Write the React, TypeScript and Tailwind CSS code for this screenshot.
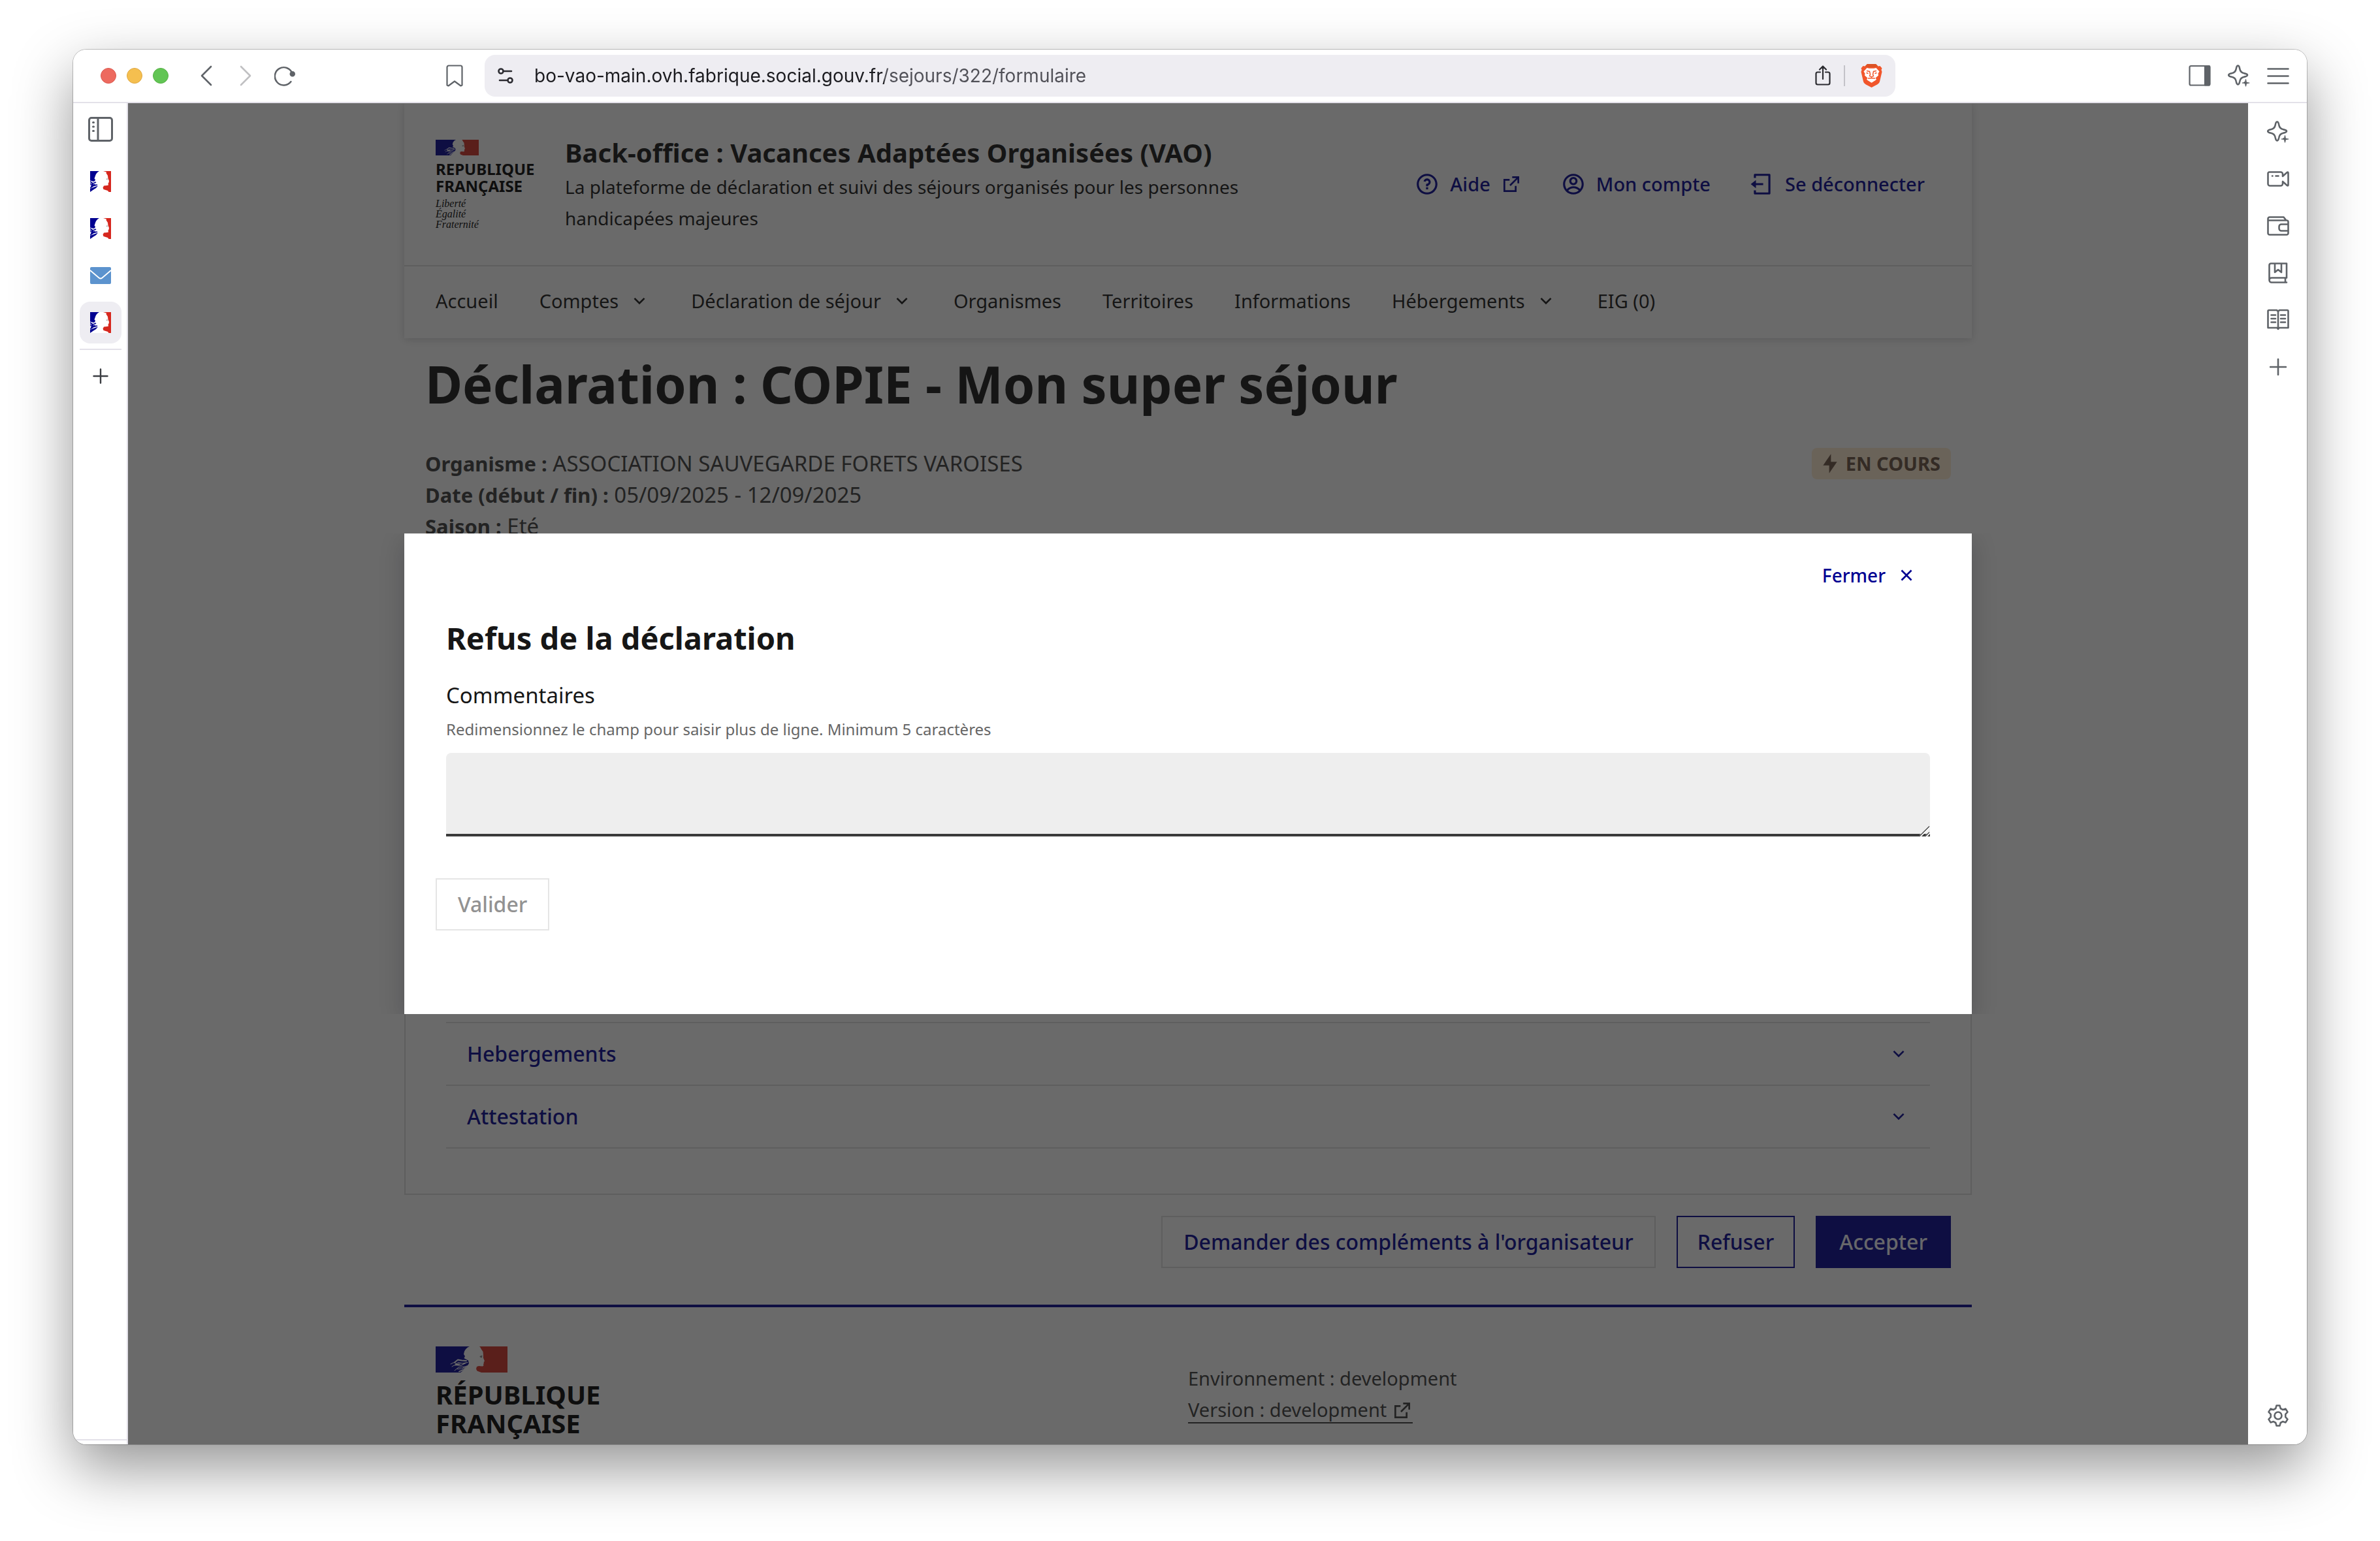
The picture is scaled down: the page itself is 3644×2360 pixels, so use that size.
import React from "react";
import {
  RiAccountCircleLine,
  RiArrowDownSLine,
  RiCloseLine,
  RiFlashlightFill,
  RiLogoutBoxLine,
  RiQuestionLine,
} from "react-icons/ri";

function FlagLogo({ className }: { className: string }) {
  return (
    <svg viewBox="0 0 110 40" className={className} aria-hidden="true">
      <path
        fill="#000091"
        d="M0 0H52C48 1.500 46 4 44 7.500L43 12L45 15L43.500 18L46 19.500L50 21.500L51 26L47 32L43 36L38 40H0Z"
      />
      <path
        fill="#D32F24"
        d="M67 0H110V40H70L63.500 37.500L62 34.500L63 31L66 30L72 30.500L73.500 29L73 27L74 25.500L73.500 24L75 22.500L73 17.500V13L72.500 8L70 4.500L68.500 1.500Z"
      />
      <g fill="none" stroke="#fff" strokeLinecap="round" strokeLinejoin="round">
        <path strokeWidth="1.800" d="M29 24.500L34 20.500L40 21.500L47 22" />
        <path strokeWidth="1" d="M23 27L28 24.500L31 26M25 31L31 27.500M29 37L35 32L44 31" />
        <path strokeWidth="1.200" d="M30 28.500L38 29.500L47 25M34 24.500L41 26L49 24.500M33 34.500L41 34L46 30.500" />
        <path strokeWidth="1.800" d="M36 38.500L43 35.500L48 30" />
      </g>
      <path fill="#fff" d="M31 25.500L39 27L36 28.500L29 29.500Z" />
      <path fill="#888" d="M67.500 15L71.500 13.500L71 17.500L69.500 17L68 16.500Z" />
    </svg>
  );
}

function Favicon() {
  return (
    <svg viewBox="0 0 32 32" className="size-8" aria-hidden="true">
      <path fill="#fff" d="M0 0H32V32H0Z" />
      <path fill="#000091" d="M0 0H14C11 1.500 9 4 8 7L6.500 11.500L8 13L7 15.500L5 16L0 14.500Z" />
      <path
        fill="none"
        stroke="#000091"
        strokeWidth="1.800"
        d="M0 16L4 19L9 17M0 19.500L5 21L1 23L8 20.500M0 26L5 22.500L11 21"
      />
      <path fill="#000091" d="M0 27L5 25L12 22.500L9 26L5 28.500L0 32Z" />
      <path
        fill="#D6281F"
        d="M20 0H32V32H28.500L27 30L20.500 28L19.500 25.500L21 22.500L26 22L28 21.500L27.500 19L28.500 17.500L29 15L27.500 11.500L27 7L24.500 3L25 1.500Z"
      />
      <path fill="#999" d="M24.500 12L26.500 11V14Z" />
    </svg>
  );
}

function Stroke({ className, w = 34, h = 34, sw = 2.2, children }: { className: string; w?: number; h?: number; sw?: number; children: React.ReactNode }) {
  return (
    <svg
      viewBox={`0 0 ${w} ${h}`}
      className={className}
      fill="none"
      stroke="currentColor"
      strokeWidth={sw}
      strokeLinecap="round"
      strokeLinejoin="round"
      aria-hidden="true"
    >
      {children}
    </svg>
  );
}

function Sparkle() {
  return (
    <Stroke className="size-[34px]" sw={2.6}>
      <path d="M15.500 1.500C17.500 1.500 17.800 4 18.300 6.500C19 10.500 21 12.500 25 13.300C27.500 13.800 30 14.200 30 16S27.500 18.200 25 18.700C21 19.500 19 21.500 18.300 25.500C17.800 28 17.500 30.500 15.500 30.500S13.200 28 12.700 25.500C12 21.500 10 19.500 6 18.700C3.500 18.200 1.200 17.800 1.200 16S3.500 13.800 6 13.300C10 12.500 12 10.500 12.700 6.500C13.200 4 13.500 1.500 15.500 1.500Z" />
      <path
        fill="currentColor"
        stroke="none"
        d="M27.500 22C28.500 22 28.500 26.500 29.200 26.800C29.500 27.200 33.500 27 33.500 28S29.500 28.800 29.200 29.200C28.500 29.500 28.500 33.500 27.500 33.500S26.500 29.500 25.800 29.200C25.500 28.800 21.500 29 21.500 28S25.500 27.200 25.800 26.800C26.500 26.500 26.500 22 27.500 22Z"
      />
    </Stroke>
  );
}

function ExternalIcon({ className }: { className: string }) {
  return (
    <svg viewBox="0 0 24 24" fill="currentColor" className={className} aria-hidden="true">
      <path d="M10 6v2H5v11h11v-5h2v7H3V6h7zm11-3v8h-2V6.400l-7.800 7.800-1.400-1.400L17.600 5H13V3h8z" />
    </svg>
  );
}

function BraveIcon() {
  return (
    <svg viewBox="0 0 33 36" className="h-9 w-[33px]" aria-hidden="true">
      <path
        fill="#F1562B"
        d="M10 0H23L26.500 3.500L29.500 3L32.500 6.500L31.500 9L32.500 12L29 27C28.500 29 27 30 25.500 31.200L16.500 36L7.500 31.200C6 30 4.500 29 4 27L.5 12L1.500 9L.5 6.500L3.500 3L6.500 3.500Z"
      />
      <path fill="#DC5325" d="M10 0H23L26.500 3.500L22 5H11L6.500 3.500Z" />
      <path
        fill="#fff"
        d="M9.500 6L13 6.800H20L23.500 6L28.500 11.500L26.500 14.500L27 17.500L22.500 21.500L24 23.500L22.500 25L16.500 28.800L10.500 25L9 23.500L10.500 21.500L6 17.500L6.500 14.500L4.500 11.500Z"
      />
      <path
        fill="none"
        stroke="#F1562B"
        strokeWidth="1.500"
        d="M9 10.500L13.500 11.500L14.500 16L13.500 18.500L16.500 20L19.500 18.500L18.500 16L19.500 11.500L24 10.500M16.500 20V22M11 22L16.500 21.500L22 22M8.500 13.500L11.500 14.500M24.500 13.500L21.500 14.500"
      />
    </svg>
  );
}

function BrowserToolbar() {
  return (
    <div className="flex h-[82px] shrink-0 items-center border-b-2 border-[#e3e1e9] bg-white text-[#5f6368]">
      <div className="flex w-[600px] shrink-0 items-center pl-[42px]">
        <div className="flex gap-4">
          <button aria-label="Fermer la fenêtre" className="size-6 rounded-full border border-[#dc5a50] bg-[#ed6a5f]" />
          <button aria-label="Réduire la fenêtre" className="size-6 rounded-full border border-[#dfa843] bg-[#f5bf4f]" />
          <button aria-label="Agrandir la fenêtre" className="size-6 rounded-full border border-[#56b045] bg-[#62c554]" />
        </div>
        <div className="ml-[42px] flex gap-7">
          <button aria-label="Précédent" className="flex size-8 items-center justify-center">
            <Stroke className="size-8" w={32} h={32} sw={2.6}>
              <path d="M23 2L9 16L23 30" />
            </Stroke>
          </button>
          <button aria-label="Suivant" className="flex size-8 items-center justify-center text-[#c0c0c2]">
            <Stroke className="size-8" w={32} h={32} sw={2.6}>
              <path d="M9 2L23 16L9 30" />
            </Stroke>
          </button>
          <button aria-label="Actualiser" className="flex size-8 items-center justify-center">
            <Stroke className="h-8 w-[34px]" w={34} h={32} sw={2.6}>
              <path d="M29 12A14.500 14.500 0 1 0 27 25.500" />
              <circle cx="29.500" cy="13" r="3.200" fill="currentColor" />
            </Stroke>
          </button>
        </div>
        <button aria-label="Ajouter aux favoris" className="ml-auto flex size-8 items-center justify-center">
          <Stroke className="h-[34px] w-[26px]" w={26} h={34}>
            <path d="M4 1.500H22a2.500 2.500 0 0 1 2.500 2.500V31.500L22.500 32.500L13 25.500L3.500 32.500L1.500 31.500V4A2.500 2.500 0 0 1 4 1.500Z" />
          </Stroke>
        </button>
      </div>
      <div className="ml-[30px] flex h-16 min-w-0 flex-1 items-center rounded-2xl bg-[#eeedf2] px-5 text-[#2b2b30]">
        <Stroke className="h-[26px] w-6 shrink-0" w={24} h={26} sw={2.6}>
          <circle cx="5" cy="6" r="3.500" />
          <path d="M9 6H21M3 20H14" />
          <circle cx="19" cy="20" r="3.500" />
        </Stroke>
        <input
          aria-label="Adresse de la page"
          defaultValue="bo-vao-main.ovh.fabrique.social.gouv.fr/sejours/322/formulaire"
          className="ml-8 min-w-0 flex-1 bg-[linear-gradient(to_right,#1b1b1f_536px,#505057_536px)] bg-clip-text font-['Inter',sans-serif] text-[28px] leading-10 text-transparent outline-none"
        />
        <button aria-label="Partager" className="flex w-6 items-center justify-center">
          <Stroke className="h-8 w-6" w={24} h={32}>
            <path d="M12 21V1.500M7 6.500L12 1.500L17 6.500M8 10.500H4a2.500 2.500 0 0 0-2.500 2.500V27A2.500 2.500 0 0 0 4 29.500H20A2.500 2.500 0 0 0 22.500 27V13A2.500 2.500 0 0 0 20 10.500H16" />
          </Stroke>
        </button>
        <span className="mr-6 ml-5 h-8 w-0.5 bg-[#c3c2c8]" />
        <button aria-label="Brave Shields">
          <BraveIcon />
        </button>
      </div>
      <div className="flex w-[630px] shrink-0 items-center justify-end gap-[26px] pr-[27px]">
        <button aria-label="Barre latérale">
          <Stroke className="size-[34px]">
            <rect x="1.500" y="2" width="31" height="29.500" rx="2" />
            <path d="M25 2H31.500V31.500H25Z" fill="currentColor" />
          </Stroke>
        </button>
        <button aria-label="Leo">
          <Sparkle />
        </button>
        <button aria-label="Menu">
          <Stroke className="size-[34px]" sw={2.6}>
            <path d="M1.500 6.500H32.500M1.500 17.500H32.500M1.500 28.500H32.500" />
          </Stroke>
        </button>
      </div>
    </div>
  );
}

const railButton = "flex h-16 w-16 shrink-0 items-center justify-center rounded-2xl";

function LeftRail() {
  return (
    <div className="flex w-[84px] shrink-0 flex-col items-center gap-2 border-r-2 border-[#e3e1e9] bg-white pt-2 pl-0.5 text-[#5f6368]">
      <button aria-label="Onglets verticaux" className={`${railButton} mb-2`}>
        <Stroke className="size-[38px]" w={38} h={38} sw={3}>
          <rect x="1.500" y="1.500" width="35" height="35" rx="3.500" />
          <path d="M15 1.500V36.500" />
          <path d="M7.500 8.500H8.500M7.500 15H8.500M7.500 21.500H8.500" />
        </Stroke>
      </button>
      <button aria-label="Onglet 1" className={railButton}>
        <Favicon />
      </button>
      <button aria-label="Onglet 2" className={railButton}>
        <Favicon />
      </button>
      <button aria-label="Messagerie" className={railButton}>
        <svg viewBox="0 0 32 26" className="h-[26px] w-8" aria-hidden="true">
          <rect width="32" height="26" rx="2" fill="#5C93CE" />
          <path d="M0 5L13.500 16.500Q16 18.500 18.500 16.500L32 5" fill="none" stroke="#fff" strokeWidth="1.800" />
        </svg>
      </button>
      <button aria-label="Onglet actif" className={`${railButton} bg-[#eeedf2]`}>
        <Favicon />
      </button>
      <span className="h-0.5 w-16 bg-[#e3e1e9]" />
      <button aria-label="Nouvel onglet" className={`${railButton} text-[#3b3d42]`}>
        <Stroke className="size-6" w={24} h={24} sw={2.4}>
          <path d="M12 1.500V22.500M1.500 12H22.500" />
        </Stroke>
      </button>
      <span className="mt-auto h-2 w-full border-t-2 border-[#e3e1e9]" />
    </div>
  );
}

function RightRail() {
  return (
    <div className="flex w-[90px] shrink-0 flex-col items-center gap-2 bg-white py-3 pl-0.5 text-[#5f6368]">
      <button aria-label="Assistant" className={railButton}>
        <Sparkle />
      </button>
      <button aria-label="Visioconférence" className={railButton}>
        <Stroke className="h-6 w-[34px]" h={24} sw={2.6}>
          <path d="M3.500 1.500H20.500A3 3 0 0 1 24 4.500V8L31 1.800Q32.500 1 32.500 3V21Q32.500 23 31 22.200L24 16V19.500A3 3 0 0 1 20.500 22.500H4.500A3 3 0 0 1 1.500 19.500V3.500A2 2 0 0 1 3.500 1.500ZM8 7.500H8.500M13.500 7.500H17.500" />
        </Stroke>
      </button>
      <button aria-label="Portefeuille" className={railButton}>
        <Stroke className="h-[30px] w-[34px]" h={30} sw={2.6}>
          <path d="M1.500 6.500V26A2.500 2.500 0 0 0 4 28.500H30A2.500 2.500 0 0 0 32.500 26V9A2.500 2.500 0 0 0 30 6.500H1.500V4A2.500 2.500 0 0 1 4 1.500H25.500L29 6M32.500 12.500H22A3.500 3.500 0 0 0 18.500 16V19A3.500 3.500 0 0 0 22 22.500H32.500" />
        </Stroke>
      </button>
      <button aria-label="Favoris" className={railButton}>
        <Stroke className="h-8 w-[30px]" w={30} h={32} sw={2.6}>
          <path d="M28 30.500H5A3.500 3.500 0 0 1 1.500 27V4A2.500 2.500 0 0 1 4 1.500H28V23.500H5A3.500 3.500 0 0 0 1.500 27M26 23.500V30.500M10 1.500V15L15 11L20 15V1.500" />
        </Stroke>
      </button>
      <button aria-label="Liste de lecture" className={railButton}>
        <Stroke className="size-[34px]" sw={2.6}>
          <path d="M17 4L15 2H3A1.500 1.500 0 0 0 1.500 3.500V29H15.500L17 31L18.500 29H32.500V3.500A1.500 1.500 0 0 0 31 2H19ZM17 4V31M6.500 9.500H13M6.500 15H13M6.500 20.500H13M21 9.500H28M21 15H28M21 20.500H28" />
        </Stroke>
      </button>
      <button aria-label="Ajouter" className={railButton}>
        <Stroke className="size-[26px]" w={26} h={26} sw={2.6}>
          <path d="M13 1V25M1 13H25" />
        </Stroke>
      </button>
      <button aria-label="Paramètres" className={`${railButton} mt-auto`}>
        <Stroke className="size-[34px]" sw={2.6}>
          <path d="M14.500 1.500H19.500L20.700 6L24 7.900L28.500 6.600L31.500 11.400L28.300 14.800V19.200L31.500 22.600L28.500 27.400L24 26.100L20.700 28L19.500 32.500H14.500L13.300 28L10 26.100L5.500 27.400L2.500 22.600L5.700 19.200V14.800L2.500 11.400L5.500 6.600L10 7.900L13.300 6Z" />
          <circle cx="17" cy="17" r="5.500" />
        </Stroke>
      </button>
    </div>
  );
}

const navItems: { label: string; menu?: boolean }[] = [
  { label: "Accueil" },
  { label: "Comptes", menu: true },
  { label: "Déclaration de séjour", menu: true },
  { label: "Organismes" },
  { label: "Territoires" },
  { label: "Informations" },
  { label: "Hébergements", menu: true },
  { label: "EIG (0)" },
];

function SiteHeader() {
  return (
    <header className="bg-white text-[#161616] shadow-[0_2px_12px_rgba(0,0,18,0.18)]">
      <div className="flex border-b-2 border-[#dddddd] px-12">
        <div className="w-[198px] shrink-0 pt-14">
          <FlagLogo className="h-6 w-[66px]" />
          <p className="mt-2 text-2xl leading-[26px] font-bold text-black">
            REPUBLIQUE
            <br />
            FRANÇAISE
          </p>
          <p className="mt-1.5 font-['Liberation_Serif',serif] text-base leading-4 text-black italic">
            Liberté
            <br />
            Égalité
            <br />
            Fraternité
          </p>
        </div>
        <div className="max-w-[1090px] py-12">
          <p className="text-[40px] leading-[56px] font-bold">Back-office : Vacances Adaptées Organisées (VAO)</p>
          <p className="text-[28px] leading-[48px]">
            La plateforme de déclaration et suivi des séjours organisés pour les personnes handicapées majeures
          </p>
        </div>
        <div className="ml-auto flex items-center gap-[60px] pr-6 text-[29px] leading-[48px] font-medium text-[#000091]">
          <a href="#aide" className="flex items-center gap-4">
            <RiQuestionLine className="size-[38px]" />
            Aide
            <ExternalIcon className="size-8" />
          </a>
          <a href="#compte" className="flex items-center gap-4">
            <RiAccountCircleLine className="size-[38px]" />
            Mon compte
          </a>
          <button className="flex items-center gap-4">
            <RiLogoutBoxLine className="size-[38px]" />
            Se déconnecter
          </button>
        </div>
      </div>
      <nav className="flex h-[110px] items-center gap-[63px] px-12 pb-1 text-[29px] leading-[48px]">
        {navItems.map((item) =>
          item.menu ? (
            <button key={item.label} className="flex items-center gap-4">
              {item.label}
              <RiArrowDownSLine className="size-8" />
            </button>
          ) : (
            <a key={item.label} href="#nav">
              {item.label}
            </a>
          ),
        )}
      </nav>
    </header>
  );
}

function Declaration() {
  return (
    <main>
      <div className="px-8 pt-[22px]">
        <h1 className="text-[78px] leading-[96px] font-bold text-[#161616]">Déclaration : COPIE - Mon super séjour</h1>
        <div className="mt-[50px] flex items-start justify-between text-[33px] leading-[48px] text-[#3a3a3a]">
          <div>
            <p>
              <b className="text-[31px]">Organisme :</b> ASSOCIATION SAUVEGARDE FORETS VAROISES
            </p>
            <p>
              <b className="text-[31px]">Date (début / fin) :</b> 05/09/2025 - 12/09/2025
            </p>
            <p>
              <b className="text-[31px]">Saison :</b> Eté
            </p>
          </div>
          <span className="flex h-12 items-center gap-2 rounded-lg bg-[#feebd0] pr-4 pl-3 text-[29px] font-bold text-[#695240]">
            <RiFlashlightFill className="size-8" />
            EN COURS
          </span>
        </div>
      </div>
      <section className="mt-[70px] border-2 border-[#dddddd] px-[62px] pt-[663px] pb-[69px]">
        <div className="border-b-2 border-[#dddddd]">
          {["Hebergements", "Attestation"].map((title) => (
            <button
              key={title}
              className="flex h-24 w-full items-center justify-between border-t-2 border-[#dddddd] px-8 text-[32px] leading-[48px] font-medium text-[#000091]"
            >
              {title}
              <RiArrowDownSLine className="size-8" />
            </button>
          ))}
        </div>
      </section>
      <div className="mt-8 flex justify-end gap-8 pr-8 text-[32px] leading-[48px] font-medium text-[#000091]">
        <button className="h-20 border-2 border-[#dddddd] px-8">Demander des compléments à l'organisateur</button>
        <button className="h-20 border-2 border-[#000091] px-[30px]">Refuser</button>
        <button className="h-20 bg-[#000091] px-9 text-[#f5f5fe]">Accepter</button>
      </div>
    </main>
  );
}

function SiteFooter() {
  return (
    <footer className="mt-14 grid grid-cols-2 border-t-4 border-[#000091] px-12">
      <div className="pt-[60px]">
        <FlagLogo className="h-10 w-[110px]" />
        <p className="mt-3 text-[40px] leading-[44px] font-bold text-black">
          RÉPUBLIQUE
          <br />
          FRANÇAISE
        </p>
      </div>
      <div className="pt-[85px] text-[29px] leading-[48px] text-[#3a3a3a]">
        <p>Environnement : development</p>
        <a href="#version" className="border-b-2 border-[#3a3a3a]">
          Version : development <ExternalIcon className="mb-1 inline size-8" />
        </a>
      </div>
    </footer>
  );
}

function RefusalDialog() {
  return (
    <div className="absolute inset-0 flex items-center bg-[#161616]/64">
      <div className="flex w-full justify-center overflow-hidden">
        <div
          role="dialog"
          aria-modal="true"
          aria-labelledby="dialog-title"
          className="w-full max-w-[2400px] bg-white pb-32 text-[#161616] shadow-[0_12px_36px_rgba(0,0,18,0.2)]"
        >
          <div className="flex h-32 items-center justify-end pr-[84px]">
            <button className="flex items-center gap-4 text-[28px] leading-[48px] font-medium text-[#000091]">
              Fermer
              <RiCloseLine className="size-8" />
            </button>
          </div>
          <div className="px-16">
            <h2 id="dialog-title" className="text-[47px] leading-[64px] font-bold">
              Refus de la déclaration
            </h2>
            <label htmlFor="commentaires" className="mt-8 block text-[33px] leading-[48px]">
              Commentaires
            </label>
            <p id="commentaires-hint" className="mt-2 text-2xl leading-10 text-[#666666]">
              Redimensionnez le champ pour saisir plus de ligne. Minimum 5 caractères
            </p>
            <div className="relative mt-4">
              <textarea
                id="commentaires"
                aria-describedby="commentaires-hint"
                className="block h-32 w-full resize-y rounded-t-lg bg-[#eeeeee] px-8 py-4 text-[32px] shadow-[inset_0_-4px_0_0_#3a3a3a] outline-none [&::-webkit-resizer]:hidden"
              />
              <svg viewBox="0 0 16 16" className="pointer-events-none absolute right-0 bottom-0 size-4" aria-hidden="true">
                <path d="M1 15.500L15.500 1M10 15.500L15.500 10" stroke="#fff" strokeWidth="3.500" />
                <path d="M0 15.500L15 .5M9 15.500L15 9.500" stroke="#4a4a4a" strokeWidth="1.500" />
              </svg>
            </div>
          </div>
          <div className="px-12 pt-16">
            <button disabled className="h-20 border-2 border-[#e5e5e5] px-8 text-[32px] leading-[48px] font-medium text-[#929292]">
              Valider
            </button>
          </div>
        </div>
      </div>
    </div>
  );
}

export default function App() {
  return (
    <div className="h-screen bg-white px-28 pt-[76px] pb-[148px] font-['Noto_Sans',sans-serif]">
      <div className="flex h-full flex-col overflow-hidden rounded-[20px] bg-white shadow-[0_0_0_1px_rgba(0,0,0,0.22),0_36px_90px_rgba(0,0,0,0.42)]">
        <BrowserToolbar />
        <div className="flex min-h-0 flex-1">
          <LeftRail />
          <div className="relative min-w-0 flex-1 overflow-hidden bg-white">
            <div className="mx-auto w-full max-w-[2400px]">
              <SiteHeader />
              <Declaration />
              <SiteFooter />
            </div>
            <RefusalDialog />
          </div>
          <RightRail />
        </div>
      </div>
    </div>
  );
}
